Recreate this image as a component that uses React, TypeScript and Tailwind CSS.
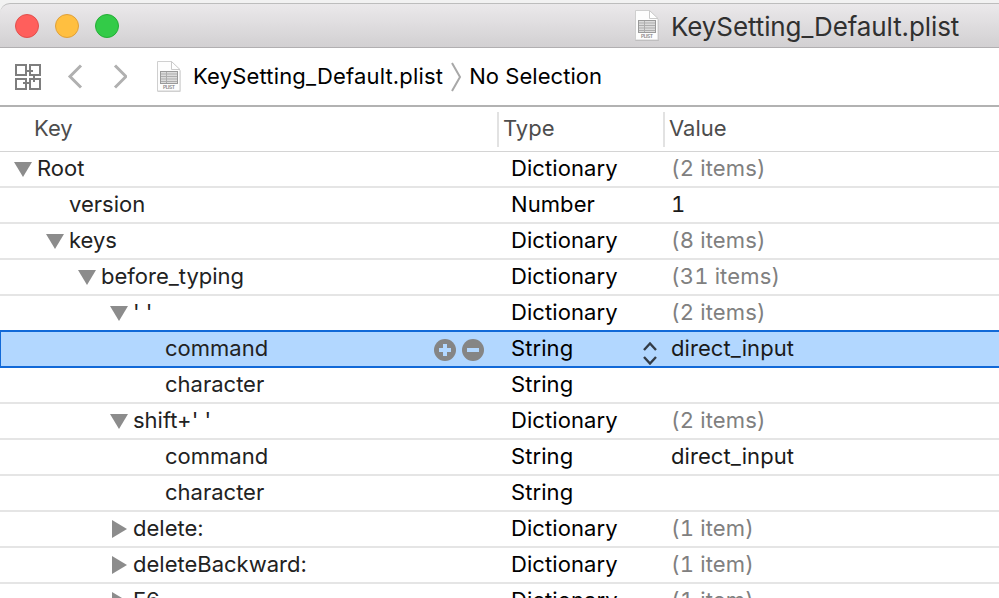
type RowData = {
  label: string;
  indent: string;
  arrow?: 'down' | 'right';
  type: string;
  value: string;
  muted?: boolean;
  selected?: boolean;
};

const rows: RowData[] = [
  { label: 'Root', indent: 'pl-[14px]', arrow: 'down', type: 'Dictionary', value: '(2 items)', muted: true },
  { label: 'version', indent: 'pl-[46px]', type: 'Number', value: '1' },
  { label: 'keys', indent: 'pl-[46px]', arrow: 'down', type: 'Dictionary', value: '(8 items)', muted: true },
  { label: 'before_typing', indent: 'pl-[78px]', arrow: 'down', type: 'Dictionary', value: '(31 items)', muted: true },
  { label: "' '", indent: 'pl-[110px]', arrow: 'down', type: 'Dictionary', value: '(2 items)', muted: true },
  { label: 'command', indent: 'pl-[142px]', type: 'String', value: 'direct_input', selected: true },
  { label: 'character', indent: 'pl-[142px]', type: 'String', value: '' },
  { label: "shift+' '", indent: 'pl-[110px]', arrow: 'down', type: 'Dictionary', value: '(2 items)', muted: true },
  { label: 'command', indent: 'pl-[142px]', type: 'String', value: 'direct_input' },
  { label: 'character', indent: 'pl-[142px]', type: 'String', value: '' },
  { label: 'delete:', indent: 'pl-[110px]', arrow: 'right', type: 'Dictionary', value: '(1 item)', muted: true },
  { label: 'deleteBackward:', indent: 'pl-[110px]', arrow: 'right', type: 'Dictionary', value: '(1 item)', muted: true },
  { label: 'F6', indent: 'pl-[110px]', arrow: 'right', type: 'Dictionary', value: '(1 item)', muted: true },
];

function PlistIcon() {
  return (
    <svg width="26" height="33" viewBox="0 0 26 33" className="shrink-0">
      <path d="M1.5 2.5H16L24.5 11V32H1.5Z" fill="#000" opacity=".18" />
      <path d="M1.5 1.5H15.5L24 10V31H1.5Z" fill="#fdfdfd" stroke="#cfcfcf" />
      <path d="M15.5 1.5V9.5H24Z" fill="#fff" stroke="#cacaca" />
      <rect x="4.5" y="11.5" width="17" height="12" fill="#dcdcdc" stroke="#9a9a9a" />
      <path d="M5 14h16M5 16.5h16M5 19h16M5 21.5h16M10.5 12v11" stroke="#adadad" />
      <text x="13" y="29.4" textAnchor="middle" textLength="12" fontSize="5" fontWeight="600" fontFamily="Inter, sans-serif" fill="#888">PLIST</text>
    </svg>
  );
}

function Arrow({ dir }: { dir?: 'down' | 'right' }) {
  return (
    <svg width="18" height="18" viewBox="0 0 18 18" className="mr-[5px] shrink-0">
      {dir === 'down' && <path d="M0 2H18L9 17Z" fill="#8c8c8c" />}
      {dir === 'right' && <path d="M2 0V18L17 9Z" fill="#8c8c8c" />}
    </svg>
  );
}

function RowControls() {
  return (
    <svg width="50" height="22" viewBox="0 0 50 22" className="mt-px mr-[14px] ml-auto shrink-0">
      <circle cx="11" cy="11" r="11" fill="#858585" />
      <circle cx="39" cy="11" r="11" fill="#858585" />
      <path d="M5 11h12M11 5v12M33 11h12" stroke="#b2d7ff" strokeWidth="4" />
    </svg>
  );
}

function Row({ row }: { row: RowData }) {
  return (
    <div
      className={
        row.selected
          ? 'z-10 -mt-0.5 flex h-[38px] shrink-0 border-y-2 border-l border-[#1169d8] bg-[#b2d7ff]'
          : 'flex h-9 shrink-0 border-b-2 border-[#e5e5e5]'
      }
    >
      <div className={`flex shrink-0 items-center ${row.selected ? '-ml-px w-[498px]' : 'w-[498px]'} ${row.indent}`}>
        <Arrow dir={row.arrow} />
        <span className="pb-0.5 leading-8 text-[#222]">{row.label}</span>
        {row.selected && <RowControls />}
      </div>
      <div className="flex w-[166px] shrink-0 items-center pl-[13px] text-black">
        <span className="pb-0.5 leading-8 tracking-[0.08px]">{row.type}</span>
        {row.selected && (
          <svg width="14" height="24" viewBox="0 0 14 24" className="mt-[7px] mr-[7px] ml-auto" fill="none" stroke="#333c47" strokeWidth="2.4">
            <path d="M1 9L7 2.5L13 9M1 16L7 22.5L13 16" />
          </svg>
        )}
      </div>
      <span className={`pb-0.5 pl-[7px] leading-8 tabular-nums ${row.muted ? 'tracking-[0.15px] text-[#808080]' : 'tracking-[0.08px] text-[#1a1a1a]'}`}>{row.value}</span>
    </div>
  );
}

export default function App() {
  return (
    <div className="flex h-[598px] w-[999px] flex-col overflow-hidden bg-[#f2f2f2] pt-[3px] font-[Inter,sans-serif] text-[22px] whitespace-pre">
      <header className="flex h-[45px] shrink-0 items-center rounded-tl-[10px] border-t border-b border-t-[#bdbdbd] border-b-[#b1afb1] bg-linear-to-b from-[#ebe9eb] to-[#d2d0d2] pl-[15px]">
        <div className="flex gap-4">
          <i className="size-6 rounded-full border border-[#e1504d] bg-[#ff5f5c]" />
          <i className="size-6 rounded-full border border-[#dfa03a] bg-[#ffbf40]" />
          <i className="size-6 rounded-full border border-[#24ae36] bg-[#33cb48]" />
        </div>
        <div className="ml-[515px] flex items-center">
          <PlistIcon />
          <span className="ml-[11px] pt-0.5 text-[26px] tracking-[-0.11px] text-[#303030]">KeySetting_Default.plist</span>
        </div>
      </header>

      <nav className="flex h-[59px] shrink-0 items-center border-b-2 border-[#b2b2b2] bg-white pl-[15px] text-black">
        <svg width="26" height="26" viewBox="0 0 26 26" fill="none" stroke="#7e7e7e" strokeWidth="2">
          <path d="M1 1H11V11H1ZM15 1H25V11H15ZM1 15H11V25H1ZM15 15H25V25H15ZM11 7H18M19 11V18M8 19H15" />
        </svg>
        <svg width="60" height="26" viewBox="0 0 60 26" className="ml-[26px]" fill="none" stroke="#b0b0b0" strokeWidth="3">
          <path d="M14 1.5L3 12.5L14 23.5M48 1.5L59 12.5L48 23.5" />
        </svg>
        <span className="ml-[29px]"><PlistIcon /></span>
        <span className="ml-[11px] tracking-[0.17px]">KeySetting_Default.plist</span>
        <svg width="12" height="30" viewBox="0 0 12 30" className="ml-2" fill="none" stroke="#a8a8a8" strokeWidth="2">
          <path d="M1 1L9 15L1 29" />
        </svg>
        <span className="ml-1.5 tracking-[0.05px]">No Selection</span>
      </nav>

      <main className="flex min-h-0 flex-1 flex-col overflow-hidden bg-white">
        <div className="flex h-[45px] shrink-0 items-center border-b border-[#d4d4d4] text-[#4d4d4d]">
          <span className="w-[497px] shrink-0 pb-0.5 pl-[34px]">Key</span>
          <span className="w-[166px] shrink-0 border-l-2 border-[#e2e2e2] pb-0.5 pl-1 leading-[33px]">Type</span>
          <span className="border-l-2 border-[#e2e2e2] pb-0.5 pl-1 leading-[33px]">Value</span>
        </div>
        {rows.map((row, i) => <Row key={i} row={row} />)}
      </main>
    </div>
  );
}
